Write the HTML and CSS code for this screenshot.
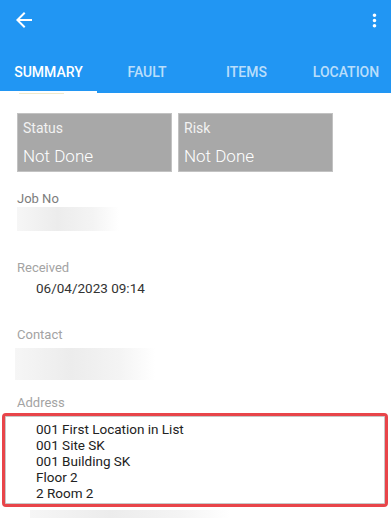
FILE: index.html
```html
<!DOCTYPE html>
<html>
<head>
  <title>Job Summary</title>
  <link rel="stylesheet" href="styles.css">
</head>
<body>
  <div class="appbar">
    <div class="toolbar">
      <svg class="icon-back" viewBox="0 0 24 24" width="24" height="24">
        <path fill="#fff" d="M20 11H7.83l5.59-5.59L12 4l-8 8 8 8 1.41-1.41L7.83 13H20v-2z"/>
      </svg>
      <svg class="icon-more" viewBox="0 0 24 24" width="21" height="21">
        <path fill="#fff" d="M12 8c1.1 0 2-.9 2-2s-.9-2-2-2-2 .9-2 2 .9 2 2 2zm0 2c-1.1 0-2 .9-2 2s.9 2 2 2 2-.9 2-2-.9-2-2-2zm0 6c-1.1 0-2 .9-2 2s.9 2 2 2 2-.9 2-2-.9-2-2-2z"/>
      </svg>
    </div>
    <div class="tabs">
      <div class="tab tab-active">SUMMARY</div>
      <div class="tab tab-2">FAULT</div>
      <div class="tab tab-3">ITEMS</div>
      <div class="tab tab-4">LOCATION</div>
    </div>
  </div>

  <div class="content">
    <div class="cut-line"></div>

    <div class="cards">
      <div class="card">
        <div class="card-label">Status</div>
        <div class="card-value">Not Done</div>
      </div>
      <div class="card">
        <div class="card-label">Risk</div>
        <div class="card-value">Not Done</div>
      </div>
    </div>

    <div class="label label-dark label-job">Job No</div>
    <div class="blur blur-job"></div>

    <div class="label label-received">Received</div>
    <div class="value">06/04/2023 09:14</div>

    <div class="label label-contact">Contact</div>
    <div class="blur blur-contact"></div>

    <div class="label label-address">Address</div>
  </div>

  <div class="address-box">
    001 First Location in List<br>
    001 Site SK<br>
    001 Building SK<br>
    Floor 2<br>
    2 Room 2
  </div>
  <div class="blur blur-bottom"></div>
</body>
</html>
```

FILE: styles.css
```css
body {
    margin: 0;
    font-family: Roboto, "Noto Sans", sans-serif;
    background: #fff;
    overflow: hidden;
}

.appbar {
    background: #2196f3;
    height: 93px;
}

.toolbar {
    height: 40px;
    display: flex;
    align-items: center;
    justify-content: space-between;
    padding: 0 6px 0 12px;
}

.icon-more {
    margin-top: 0;
}

.tabs {
    display: flex;
    height: 53px;
    width: 396px;
}

.tab {
    box-sizing: border-box;
    padding-top: 24px;
    height: 53px;
    line-height: 16px;
    font-size: 14px;
    font-weight: 500;
    text-align: center;
    color: rgba(255, 255, 255, 0.7);
    width: 100px;
}

.tab-active {
    width: 97px;
    color: #fff;
    border-bottom: 2px solid #fff;
}

.tab-3 {
    width: 99px;
}

.content {
    padding-left: 17px;
}

.cut-line {
    width: 45px;
    height: 1px;
    margin-left: 2px;
    background: #efe9cc;
}

.cards {
    display: flex;
    gap: 6px;
    margin-top: 19px;
}

.card {
    box-sizing: border-box;
    width: 155px;
    height: 59px;
    background: #a8a8a8;
    border: 1px solid #c2c2c2;
    padding: 6px 5px 0 5px;
}

.card-label {
    font-size: 14px;
    line-height: 16px;
    color: #f2f2f2;
}

.card-value {
    margin-top: 10px;
    font-size: 17px;
    line-height: 20px;
    font-weight: 300;
    color: #fff;
}

.label {
    font-size: 13px;
    line-height: 16px;
    color: #a3a3a3;
}

.label-dark {
    color: #7c7c7c;
}

.label-job {
    margin-top: 19px;
}

.blur {
    background: linear-gradient(90deg, #f6f6f6 0%, #ececec 40%, #f4f4f4 75%, #fff 100%);
}

.blur-job {
    width: 102px;
    height: 24px;
}

.label-received {
    margin-top: 29px;
}

.value {
    margin-top: 4px;
    padding-left: 19px;
    font-size: 13.5px;
    line-height: 16px;
    color: #333;
}

.label-contact {
    margin-top: 31px;
}

.blur-contact {
    margin-top: 5px;
    margin-left: -2px;
    width: 140px;
    height: 32px;
}

.label-address {
    margin-top: 15px;
}

.address-box {
    box-sizing: border-box;
    margin: 2px 3px 0 2px;
    height: 94px;
    border: 3px solid #e8454a;
    border-radius: 4px;
    box-shadow: inset 0 0 0 1px #c8c8c8;
    padding: 5px 0 0 31px;
    font-size: 13.5px;
    line-height: 16px;
    color: #222;
}

.blur-bottom {
    margin: 3px 0 0 30px;
    width: 200px;
    height: 10px;
}
```
